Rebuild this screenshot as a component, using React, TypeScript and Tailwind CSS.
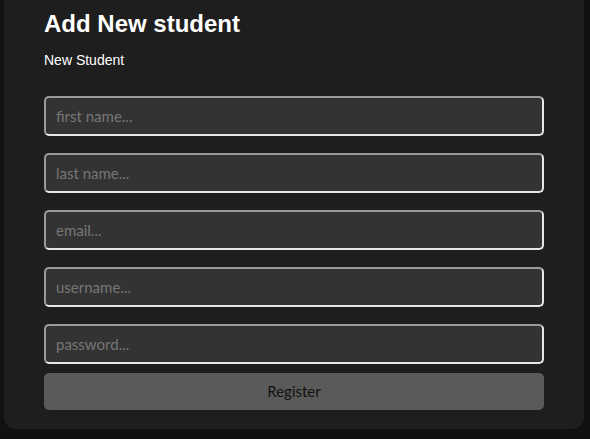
import React from 'react';

const fields = ['first name...', 'last name...', 'email...', 'username...', 'password...'];

export default function App() {
  return (
    <div className="min-h-screen bg-[#111111] pl-1 pr-[6px] pb-[10px]">
      <div className="rounded-b-xl bg-[#1e1e1e] px-10 pt-[10px] pb-[19px]">
        {/* Header */}
        <h2 className="text-2xl leading-[27px] font-bold text-white font-['Liberation_Sans',Arial,sans-serif]">
          Add New student
        </h2>
        <p className="mt-[15px] text-sm leading-4 text-white font-['Liberation_Sans',Arial,sans-serif]">
          New Student
        </p>

        {/* Form */}
        <form className="mt-[28px] flex flex-col" onSubmit={(e) => e.preventDefault()}>
          <div className="flex flex-col gap-[17px]">
            {fields.map((f) => (
              <input
                key={f}
                type={f.startsWith('password') ? 'password' : 'text'}
                placeholder={f}
                className="h-10 w-full rounded-[5px] border-2 border-t-[#9a9a9a] border-l-[#9a9a9a] border-r-[#e6e6e6] border-b-[#e6e6e6] bg-[#333333] pl-[10px] text-[15px] text-white outline-none placeholder:text-[#777777] font-['Lato',sans-serif]"
              />
            ))}
          </div>
          <button
            type="submit"
            className="mt-[9px] h-[37px] w-full rounded-[5px] bg-[#5a5a5a] text-[15px] text-[#111111] font-['Lato',sans-serif]"
          >
            Register
          </button>
        </form>
      </div>
    </div>
  );
}
